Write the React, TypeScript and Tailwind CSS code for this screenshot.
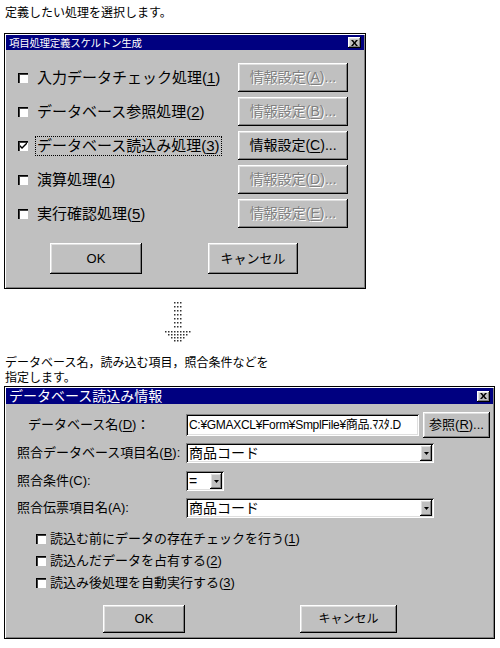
import React from "react";

const raised =
  "shadow-[inset_-1px_-1px_0_#000,inset_1px_1px_0_#fff,inset_-2px_-2px_0_#808080,inset_2px_2px_0_#dfdfdf]";
const sunken =
  "shadow-[inset_1px_1px_0_#808080,inset_-1px_-1px_0_#fff,inset_2px_2px_0_#000,inset_-2px_-2px_0_#dfdfdf]";
const etched = "text-[#808080] [text-shadow:1px_1px_0_#fff]";

const CloseBox = () => (
  <div className={`w-[13px] h-[11px] bg-[#c0c0c0] ${raised} flex items-center justify-center`}>
    <svg width="7" height="6" viewBox="0 0 7 6">
      <path d="M0 0h2l1.5 2 1.5-2h2l-2.5 3 2.5 3h-2l-1.5-2-1.5 2h-2l2.5-3z" fill="#000" />
    </svg>
  </div>
);

const Check = ({ checked = false }: { checked?: boolean }) => (
  <div className="w-[10px] h-[10px] shrink-0 bg-white shadow-[inset_1px_1px_0_#000,inset_2px_2px_0_#404040,inset_-1px_-1px_0_#fff] flex items-center justify-center">
    {checked && (
      <svg width="7" height="7" viewBox="0 0 7 7">
        <path d="M0 3l2 2 5-5v2l-5 5-2-2z" fill="#000" />
      </svg>
    )}
  </div>
);

const Mn = ({ pre, k, post }: { pre: string; k: string; post: string }) => (
  <>
    {pre}
    <span className="underline underline-offset-2">{k}</span>
    {post}
  </>
);

const DropBtn = () => (
  <div className={`w-[12px] h-full bg-[#c0c0c0] ${raised} flex items-center justify-center`}>
    <svg width="5" height="3" viewBox="0 0 5 3">
      <path d="M0 0h5l-2.5 3z" fill="#000" />
    </svg>
  </div>
);

const Combo = ({ w, value }: { w: string; value: string }) => (
  <div className={`${w} h-[20px] bg-white ${sunken} flex items-stretch p-[2px]`}>
    <div className="flex-1 text-[14px] leading-[16px] pl-[1px] text-black overflow-hidden whitespace-nowrap">
      {value}
    </div>
    <DropBtn />
  </div>
);

const procRows = [
  { label: "入力データチェック処理", k: "1", btn: "A", enabled: false, checked: false, focus: false },
  { label: "データベース参照処理", k: "2", btn: "B", enabled: false, checked: false, focus: false },
  { label: "データベース読込み処理", k: "3", btn: "C", enabled: true, checked: true, focus: true },
  { label: "演算処理", k: "4", btn: "D", enabled: false, checked: false, focus: false },
  { label: "実行確認処理", k: "5", btn: "E", enabled: false, checked: false, focus: false },
];

const Arrow = () => {
  const dots: { x: number; y: number }[] = [];
  [0, 4, 8, 12, 16, 20, 24].forEach((y) => [11, 14, 17].forEach((x) => dots.push({ x, y })));
  const head = [
    { y: 29, from: 2, to: 26 },
    { y: 32, from: 5, to: 23 },
    { y: 35, from: 8, to: 20 },
    { y: 38, from: 11, to: 17 },
  ];
  head.forEach((r) => {
    for (let x = r.from; x <= r.to; x += 3) dots.push({ x, y: r.y });
  });
  return (
    <svg width="30" height="42" viewBox="0 0 30 42" className="ml-[163px] mt-[13px]">
      {dots.map((d, i) => (
        <rect key={i} x={d.x} y={d.y} width="1.5" height="1.5" fill="#333" />
      ))}
    </svg>
  );
};

export default function App() {
  return (
    <div className="w-[500px] h-[648px] bg-white text-black font-['Liberation_Sans','Noto_Sans_CJK_JP',sans-serif] flex flex-col">
      <p className="pt-[6px] pl-[5px] text-[12px] leading-[14px]">定義したい処理を選択します。</p>

      {/* dialog 1 */}
      <div className="mt-[13px] ml-[4px] w-[362px] h-[256px] bg-[#c0c0c0] border border-black shadow-[inset_1px_1px_0_#fff,inset_-1px_-1px_0_#808080] flex flex-col">
        <div className="m-[1px] h-[15px] bg-[#000080] flex items-center justify-between pl-[3px] pr-[3px]">
          <span className="text-white text-[10.5px] leading-[12px] tracking-[-0.3px]">項目処理定義スケルトン生成</span>
          <CloseBox />
        </div>
        <div className="mt-[12px] flex flex-col gap-[5px] pl-[13px] pr-[17px]">
          {procRows.map((r) => (
            <div key={r.k} className="h-[29px] flex items-center">
              <Check checked={r.checked} />
              <span
                className={`ml-[7px] text-[15px] leading-[18px] px-[1px] border ${
                  r.focus ? "border-dotted border-black" : "border-transparent"
                }`}
              >
                <Mn pre={r.label + "("} k={r.k} post=")" />
              </span>
              <div className="flex-1" />
              <div
                className={`w-[110px] h-[29px] bg-[#c0c0c0] ${raised} flex items-center justify-center text-[14px] ${
                  r.enabled ? "text-black" : etched
                }`}
              >
                <Mn pre="情報設定(" k={r.btn} post=")..." />
              </div>
            </div>
          ))}
        </div>
        <div className="mt-[15px] flex pl-[45px] gap-[66px]">
          <div className={`w-[92px] h-[31px] ${raised} flex items-center justify-center text-[13px]`}>OK</div>
          <div className={`w-[90px] h-[31px] ${raised} flex items-center justify-center text-[13px]`}>キャンセル</div>
        </div>
      </div>

      <Arrow />

      <p className="mt-[12px] pl-[5px] text-[12px] leading-[15px]">
        データベース名，読み込む項目，照合条件などを
        <br />
        指定します。
      </p>

      {/* dialog 2 */}
      <div className="ml-[4px] w-[491px] h-[253px] bg-[#c0c0c0] border border-black shadow-[inset_1px_1px_0_#fff,inset_-1px_-1px_0_#808080] flex flex-col text-[13px]">
        <div className="m-[1px] h-[16px] bg-[#000080] flex items-center justify-between pl-[3px] pr-[3px]">
          <span className="text-white text-[14px] leading-[16px]">データベース読込み情報</span>
          <CloseBox />
        </div>

        <div className="mt-[7px] h-[26px] flex items-center pl-[23px]">
          <span className="w-[158px] leading-[16px]">
            <Mn pre="データベース名(" k="D" post=")：" />
          </span>
          <div className={`w-[233px] h-[22px] bg-white ${sunken} flex items-center pl-[3px] overflow-hidden whitespace-nowrap text-[12px] tracking-[-0.3px]`}>
            C:¥GMAXCL¥Form¥SmplFile¥商品.ﾏｽﾀ.D
          </div>
          <div className={`ml-[4px] w-[67px] h-[26px] ${raised} flex items-center justify-center text-[13px]`}>
            <Mn pre="参照(" k="R" post=")..." />
          </div>
        </div>

        <div className="mt-[5px] flex items-center pl-[12px]">
          <span className="w-[169px] leading-[16px]">
            <Mn pre="照合データベース項目名(" k="B" post="):" />
          </span>
          <Combo w="w-[248px]" value="商品コード" />
        </div>

        <div className="mt-[8px] flex items-center pl-[12px]">
          <span className="w-[169px] leading-[16px]">照合条件(C):</span>
          <Combo w="w-[38px]" value="=" />
        </div>

        <div className="mt-[7px] flex items-center pl-[12px]">
          <span className="w-[169px] leading-[16px]">照合伝票項目名(A):</span>
          <Combo w="w-[248px]" value="商品コード" />
        </div>

        <div className="mt-[10px] flex flex-col pl-[31px]">
          {[
            { t: "読込む前にデータの存在チェックを行う(", k: "1" },
            { t: "読込んだデータを占有する(", k: "2" },
            { t: "読込み後処理を自動実行する(", k: "3" },
          ].map((c) => (
            <div key={c.k} className="h-[22px] flex items-center gap-[4px]">
              <Check />
              <span className="leading-[16px]">
                <Mn pre={c.t} k={c.k} post=")" />
              </span>
            </div>
          ))}
        </div>

        <div className="mt-[11px] flex pl-[98px] gap-[115px]">
          <div className={`w-[82px] h-[28px] ${raised} flex items-center justify-center text-[13px]`}>OK</div>
          <div className={`w-[97px] h-[28px] ${raised} flex items-center justify-center text-[12px]`}>キャンセル</div>
        </div>
      </div>
    </div>
  );
}
